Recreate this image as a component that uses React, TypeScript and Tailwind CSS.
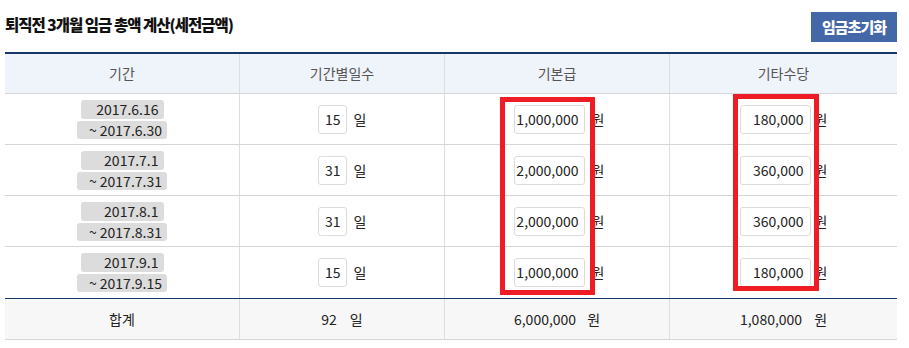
import React from 'react'

interface Row {
  from: string
  to: string
  days: number
  base: string
  extra: string
}

const ROWS: Row[] = [
  { from: '2017.6.16', to: '~ 2017.6.30', days: 15, base: '1,000,000', extra: '180,000' },
  { from: '2017.7.1', to: '~ 2017.7.31', days: 31, base: '2,000,000', extra: '360,000' },
  { from: '2017.8.1', to: '~ 2017.8.31', days: 31, base: '2,000,000', extra: '360,000' },
  { from: '2017.9.1', to: '~ 2017.9.15', days: 15, base: '1,000,000', extra: '180,000' },
]

const cols = 'grid grid-cols-[235px_205px_225px_227px]'

export default function App() {
  return (
    <div className="w-[909px] h-[348px] bg-white text-[#222] font-['Noto_Sans_CJK_KR','Noto_Sans',sans-serif]">
      {/* Title bar */}
      <div className="flex items-start justify-between pl-[5px] pr-[12px] pt-[12px] h-[52px]">
        <h2 className="mt-[1px] text-[15.5px] font-black leading-[22px] tracking-[-1px] text-[#111]">
          퇴직전 3개월 임금 총액 계산(세전금액)
        </h2>
        <button className="w-[86px] h-[30px] bg-[#4467a7] text-white text-[15px] font-black tracking-[-1px]">
          임금초기화
        </button>
      </div>

      {/* Table */}
      <div className="relative ml-[5px] w-[892px] border-t-2 border-[#173766]">
        <div className={`${cols} h-[40px] bg-[#eff3fa] border-b border-[#d6d6d6] text-[14px] text-[#555]`}>
          {['기간', '기간별일수', '기본급', '기타수당'].map((h, i) => (
            <div key={h} className={`flex items-center justify-center ${i < 3 ? 'border-r border-[#dedede]' : ''}`}>
              {h}
            </div>
          ))}
        </div>

        {ROWS.map((r, idx) => (
          <div key={idx} className={`${cols} h-[51px] text-[14px] ${idx < 3 ? 'border-b border-[#d6d6d6]' : ''}`}>
            <div className="flex flex-col items-center justify-center gap-[2px] border-r border-[#dedede]">
              <div className="w-[83px] h-[19px] rounded-[3px] bg-[#dcdcdc] text-right pr-[5px] leading-[19px]">{r.from}</div>
              <div className="w-[90px] h-[18px] rounded-[3px] bg-[#dcdcdc] text-right pr-[5px] leading-[18px]">{r.to}</div>
            </div>
            <div className="flex items-center justify-center border-r border-[#dedede]">
              <div className="w-[29px] h-[29px] rounded-[3px] border border-[#dcdcdc] text-right pr-[5px] leading-[27px]">{r.days}</div>
              <span className="ml-[7px]">일</span>
            </div>
            <div className="flex items-center justify-center pl-[4px] border-r border-[#dedede]">
              <div className="w-[71px] h-[29px] rounded-[3px] border border-[#dcdcdc] text-right pr-[5px] leading-[27px]">{r.base}</div>
              <span className="ml-[7px]">원</span>
            </div>
            <div className="flex items-center justify-center">
              <div className="w-[71px] h-[29px] rounded-[3px] border border-[#dcdcdc] text-right pr-[6px] leading-[27px]">{r.extra}</div>
              <span className="ml-[4px]">원</span>
            </div>
          </div>
        ))}

        {/* Total */}
        <div className={`${cols} h-[42px] bg-[#f7f7f7] border-t border-[#173766] border-b border-b-[#d6d6d6] text-[14px]`}>
          <div className="flex items-center justify-center border-r border-[#dedede]">합계</div>
          <div className="flex items-center justify-center border-r border-[#dedede]">
            92<span className="ml-[13px]">일</span>
          </div>
          <div className="flex items-center justify-center border-r border-[#dedede]">
            6,000,000<span className="ml-[11px]">원</span>
          </div>
          <div className="flex items-center justify-center">
            1,080,000<span className="ml-[12px]">원</span>
          </div>
        </div>

        {/* Red highlight boxes */}
        <div className="absolute left-[495px] top-[43px] w-[95px] h-[198px] border-[5px] border-[#ee1c25]" />
        <div className="absolute left-[728px] top-[40px] w-[86px] h-[197px] border-[5px] border-[#ee1c25]" />
      </div>
    </div>
  )
}
